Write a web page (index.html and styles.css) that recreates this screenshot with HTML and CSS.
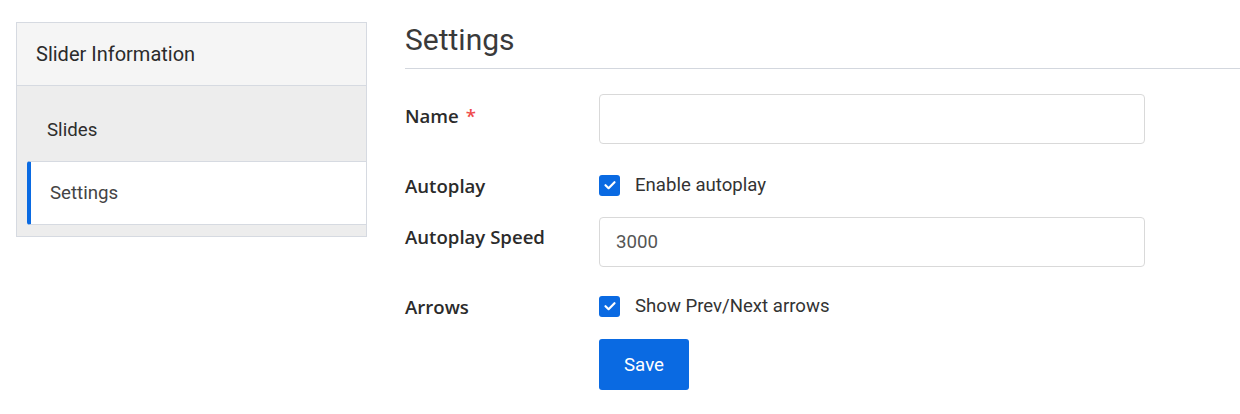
FILE: index.html
```html
<!DOCTYPE html>
<html>
<head>
<meta charset="utf-8">
<link rel="stylesheet" href="styles.css">
</head>
<body>
<div class="page">
  <aside class="sidebar">
    <div class="sidebar-header">Slider Information</div>
    <nav class="sidebar-nav">
      <a class="nav-item">Slides</a>
      <a class="nav-item active">Settings</a>
    </nav>
  </aside>
  <main class="main">
    <h1 class="title">Settings</h1>
    <form class="form">
      <div class="row row-name">
        <label class="label">Name <span class="req">*</span></label>
        <div class="control"><input class="input" type="text" value=""></div>
      </div>
      <div class="row row-check1">
        <label class="label">Autoplay</label>
        <div class="control check">
          <span class="box"><svg viewBox="0 0 20 20" width="20" height="20"><path d="M5.5 10.2 L8.6 13.2 L14.5 7.2" fill="none" stroke="#fff" stroke-width="2.2" stroke-linecap="round" stroke-linejoin="round"/></svg></span>
          <span class="check-text">Enable autoplay</span>
        </div>
      </div>
      <div class="row row-speed">
        <label class="label">Autoplay Speed</label>
        <div class="control"><input class="input" type="text" value="3000"></div>
      </div>
      <div class="row row-check2">
        <label class="label">Arrows</label>
        <div class="control check">
          <span class="box"><svg viewBox="0 0 20 20" width="20" height="20"><path d="M5.5 10.2 L8.6 13.2 L14.5 7.2" fill="none" stroke="#fff" stroke-width="2.2" stroke-linecap="round" stroke-linejoin="round"/></svg></span>
          <span class="check-text">Show Prev/Next arrows</span>
        </div>
      </div>
      <div class="row row-save">
        <div class="label"></div>
        <div class="control"><button class="btn" type="button">Save</button></div>
      </div>
    </form>
  </main>
</div>
</body>
</html>
```
FILE: styles.css
```css
* { box-sizing: border-box; }
html, body { margin: 0; padding: 0; background: #fff; }
body { font-family: Roboto, "Liberation Sans", sans-serif; color: #333; }

.page {
  display: flex;
  align-items: flex-start;
  padding: 22px 0 0 16px;
  gap: 38px;
}

.sidebar {
  width: 351px;
  flex: none;
  border: 1px solid #d6dae1;
  background: #ededed;
}
.sidebar-header {
  height: 63px;
  background: #f5f5f5;
  border-bottom: 1px solid #d6dae1;
  padding-left: 19px;
  display: flex;
  align-items: center;
  font-size: 20px;
  color: #2b2b2b;
}
.sidebar-nav {
  display: flex;
  flex-direction: column;
  padding: 13px 0 11px 10px;
}
.nav-item {
  height: 62px;
  display: flex;
  align-items: center;
  padding-left: 20px;
  font-size: 18.7px;
  color: #2e2e2e;
}
.nav-item.active {
  height: 64px;
  background: #fff;
  border-top: 1px solid #d6dae1;
  border-bottom: 1px solid #d6dae1;
  border-left: 4px solid #0a6ae2;
  border-radius: 3px 0 0 3px;
  padding-left: 19px;
  color: #444;
}

.main {
  flex: 1;
  min-width: 0;
}
.title {
  margin: 0;
  font-weight: 400;
  font-size: 30px;
  color: #3a3a3a;
  line-height: 36px;
  height: 47px;
  border-bottom: 1px solid #d3d7de;
}

.form { padding-top: 25px; }
.row {
  display: grid;
  grid-template-columns: 194px 546px;
  align-items: center;
}
.label {
  font-family: "Open Sans", "Liberation Sans", sans-serif;
  font-weight: 600;
  font-size: 18.6px;
  color: #2b2b2b;
}
.req { color: #ef4b4b; margin-left: 2px; }

.row-name { margin-bottom: 24px; }
.row-name .label { align-self: start; padding-top: 9px; }
.row-check1 { height: 34px; margin-bottom: 15px; }
.row-speed .label { align-self: start; padding-top: 7px; }
.row-speed { margin-bottom: 22px; }
.row-check2 { height: 34px; margin-bottom: 16px; }

.input {
  width: 546px;
  height: 50px;
  border: 1px solid #d9d9d9;
  border-radius: 4px;
  padding: 0 16px;
  font-family: Roboto, "Liberation Sans", sans-serif;
  font-size: 18.7px;
  color: #555;
  outline: none;
}

.check {
  display: flex;
  align-items: center;
  gap: 15px;
}
.box {
  width: 21px;
  height: 21px;
  border-radius: 3px;
  background: #0a6ae2;
  display: flex;
  align-items: center;
  justify-content: center;
}
.box svg { display: block; }
.check-text { font-size: 18.6px; color: #333; }

.btn {
  width: 90px;
  height: 51px;
  border: none;
  border-radius: 3px;
  background: #0a6ae2;
  color: #fff;
  font-family: Roboto, "Liberation Sans", sans-serif;
  font-size: 18.7px;
}
```
